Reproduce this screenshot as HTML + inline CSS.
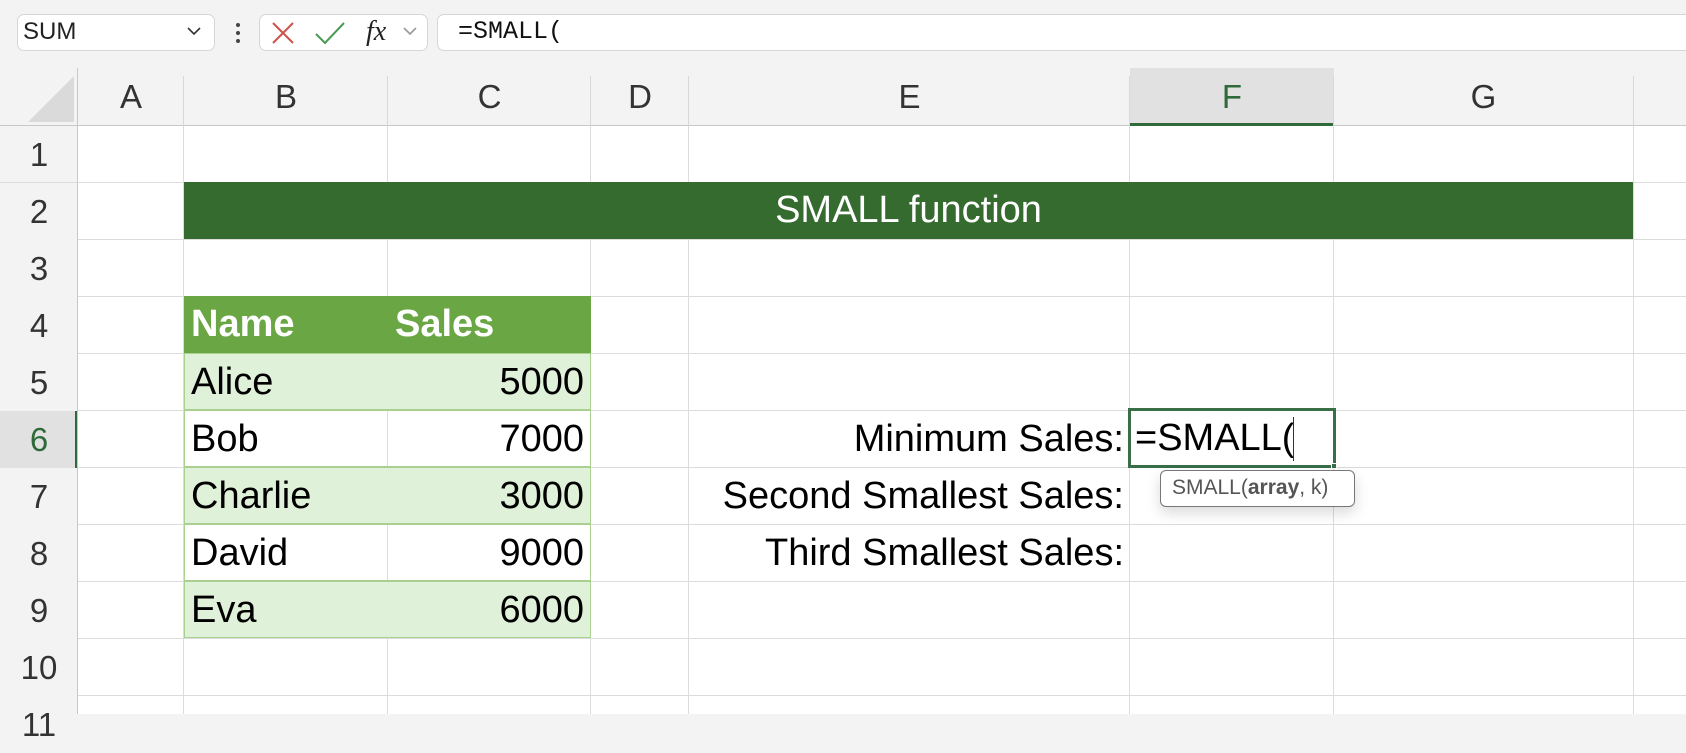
<!DOCTYPE html>
<html><head><meta charset="utf-8"><style>
*{margin:0;padding:0;box-sizing:border-box}
body{width:1686px;height:714px;overflow:hidden;background:#f3f3f3;font-family:"Liberation Sans",sans-serif;position:relative}
.abs{position:absolute}
.box{position:absolute;background:#fff;border:1px solid #d6d6d6;border-radius:7px}
.grid{position:absolute;left:78px;top:126px;width:1608px;height:588px;background:#fff}
.vl{position:absolute;top:126px;height:588px;width:1px;background:#dcdcdc}
.hl{position:absolute;left:78px;width:1608px;height:1px;background:#dcdcdc}
.ch{position:absolute;top:68px;height:58px;line-height:58px;text-align:center;font-size:33px;color:#333}
.rh{position:absolute;left:0;width:78px;text-align:center;font-size:33px;color:#333}
.c{position:absolute;font-size:38px;color:#000;line-height:57px;white-space:nowrap}
</style></head><body>
<div class="box" style="left:17px;top:14px;width:198px;height:37px"></div>
<div class="abs" style="left:23px;top:16px;font-size:24px;line-height:32px;color:#222">SUM</div>
<svg class="abs" style="left:186px;top:25px" width="16" height="12"><path d="M2 3 L8 9 L14 3" stroke="#333" stroke-width="1.6" fill="none"/></svg>
<div class="abs" style="left:236px;top:23px;width:4px;height:4px;background:#444;border-radius:2px"></div>
<div class="abs" style="left:236px;top:31px;width:4px;height:4px;background:#444;border-radius:2px"></div>
<div class="abs" style="left:236px;top:39px;width:4px;height:4px;background:#444;border-radius:2px"></div>
<div class="box" style="left:259px;top:14px;width:169px;height:37px"></div>
<svg class="abs" style="left:270px;top:20px" width="26" height="26"><path d="M3 3 L23 23 M23 3 L3 23" stroke="#d0504a" stroke-width="2" fill="none"/></svg>
<svg class="abs" style="left:314px;top:20px" width="32" height="26"><path d="M2 14 L11 23 L30 3" stroke="#4a9a52" stroke-width="2" fill="none"/></svg>
<div class="abs" style="left:366px;top:14px;font-family:'Liberation Serif',serif;font-style:italic;font-size:28px;color:#222;line-height:36px">fx</div>
<svg class="abs" style="left:402px;top:25px" width="16" height="12"><path d="M2 3 L8 9 L14 3" stroke="#999" stroke-width="1.6" fill="none"/></svg>
<div class="box" style="left:437px;top:14px;width:1260px;height:37px;border-right:none;border-radius:7px 0 0 7px"></div>
<div class="abs" style="left:458px;top:16px;font-family:'Liberation Mono',monospace;font-size:25px;line-height:32px;color:#111">=SMALL(</div>
<div class="abs" style="left:0;top:68px;width:1686px;height:58px;background:#f3f3f3;border-bottom:1px solid #c8c8c8"></div>
<svg class="abs" style="left:24px;top:74px" width="52" height="50"><path d="M50 2 L50 48 L4 48 Z" fill="#dadada"/></svg>
<div class="abs" style="left:1130px;top:68px;width:204px;height:58px;background:#e1e1e1;border-bottom:3px solid #2f6b3a"></div>
<div class="abs" style="left:0;top:411px;width:78px;height:57px;background:#e1e1e1;border-right:3px solid #2f6b3a"></div>
<div class="ch" style="left:78px;width:106px">A</div>
<div class="ch" style="left:184px;width:204px">B</div>
<div class="ch" style="left:388px;width:203px">C</div>
<div class="ch" style="left:591px;width:98px">D</div>
<div class="ch" style="left:689px;width:441px">E</div>
<div class="ch" style="left:1130px;width:204px;color:#2f6b3a">F</div>
<div class="ch" style="left:1334px;width:299px">G</div>
<div class="abs" style="left:183px;top:76px;width:1px;height:50px;background:#d8d8d8"></div>
<div class="abs" style="left:387px;top:76px;width:1px;height:50px;background:#d8d8d8"></div>
<div class="abs" style="left:590px;top:76px;width:1px;height:50px;background:#d8d8d8"></div>
<div class="abs" style="left:688px;top:76px;width:1px;height:50px;background:#d8d8d8"></div>
<div class="abs" style="left:1129px;top:76px;width:1px;height:50px;background:#d8d8d8"></div>
<div class="abs" style="left:1333px;top:76px;width:1px;height:50px;background:#d8d8d8"></div>
<div class="abs" style="left:1633px;top:76px;width:1px;height:50px;background:#d8d8d8"></div>
<div class="abs" style="left:77px;top:68px;width:1px;height:646px;background:#c8c8c8"></div>
<div class="grid"></div>
<div class="vl" style="left:183px"></div><div class="vl" style="left:387px"></div><div class="vl" style="left:590px"></div><div class="vl" style="left:688px"></div><div class="vl" style="left:1129px"></div><div class="vl" style="left:1333px"></div><div class="vl" style="left:1633px"></div>
<div class="hl" style="top:182px"></div><div class="hl" style="top:239px"></div><div class="hl" style="top:296px"></div><div class="hl" style="top:353px"></div><div class="hl" style="top:410px"></div><div class="hl" style="top:467px"></div><div class="hl" style="top:524px"></div><div class="hl" style="top:581px"></div><div class="hl" style="top:638px"></div><div class="hl" style="top:695px"></div>
<div class="rh" style="top:126px;line-height:57px">1</div>
<div class="rh" style="top:183px;line-height:57px">2</div>
<div class="rh" style="top:240px;line-height:57px">3</div>
<div class="rh" style="top:297px;line-height:57px">4</div>
<div class="rh" style="top:354px;line-height:57px">5</div>
<div class="rh" style="top:411px;line-height:57px;color:#2f6b3a">6</div>
<div class="rh" style="top:468px;line-height:57px">7</div>
<div class="rh" style="top:525px;line-height:57px">8</div>
<div class="rh" style="top:582px;line-height:57px">9</div>
<div class="rh" style="top:639px;line-height:57px">10</div>
<div class="rh" style="top:696px;line-height:57px">11</div>
<div class="abs" style="left:0;top:182px;width:78px;height:1px;background:#dcdcdc"></div>
<div class="abs" style="left:184px;top:182px;width:1449px;height:57px;background:#356b2f;color:#fff;font-size:38px;line-height:57px;text-align:center">SMALL function</div>
<div class="abs" style="left:184px;top:296px;width:407px;height:57px;background:#6aa744"></div>
<div class="c" style="left:191px;top:296px;color:#fff;font-weight:bold">Name</div>
<div class="c" style="left:395px;top:296px;color:#fff;font-weight:bold">Sales</div>
<div class="abs" style="left:184px;top:353px;width:407px;height:57px;background:#e0f1d9;border:1px solid #a9d08e"></div>
<div class="abs" style="left:184px;top:410px;width:407px;height:57px;border:1px solid #a9d08e;background:#fff"></div>
<div class="abs" style="left:387px;top:411px;width:1px;height:55px;background:#dcdcdc"></div>
<div class="abs" style="left:184px;top:467px;width:407px;height:57px;background:#e0f1d9;border:1px solid #a9d08e"></div>
<div class="abs" style="left:184px;top:524px;width:407px;height:57px;border:1px solid #a9d08e;background:#fff"></div>
<div class="abs" style="left:387px;top:525px;width:1px;height:55px;background:#dcdcdc"></div>
<div class="abs" style="left:184px;top:581px;width:407px;height:57px;background:#e0f1d9;border:1px solid #a9d08e"></div>
<div class="c" style="left:191px;top:354px">Alice</div><div class="c" style="left:388px;width:196px;text-align:right;top:354px">5000</div>
<div class="c" style="left:191px;top:411px">Bob</div><div class="c" style="left:388px;width:196px;text-align:right;top:411px">7000</div>
<div class="c" style="left:191px;top:468px">Charlie</div><div class="c" style="left:388px;width:196px;text-align:right;top:468px">3000</div>
<div class="c" style="left:191px;top:525px">David</div><div class="c" style="left:388px;width:196px;text-align:right;top:525px">9000</div>
<div class="c" style="left:191px;top:582px">Eva</div><div class="c" style="left:388px;width:196px;text-align:right;top:582px">6000</div>
<div class="c" style="left:600px;width:524px;text-align:right;top:411px">Minimum Sales:</div>
<div class="c" style="left:600px;width:524px;text-align:right;top:468px">Second Smallest Sales:</div>
<div class="c" style="left:600px;width:524px;text-align:right;top:525px">Third Smallest Sales:</div>
<div class="abs" style="left:1128px;top:408px;width:208px;height:60px;border:3px solid #3a6e47;background:#fff"></div>
<div class="c" style="left:1135px;top:410px">=SMALL(</div>
<div class="abs" style="left:1293px;top:417px;width:1px;height:44px;background:#333"></div>
<div class="abs" style="left:1331px;top:463px;width:6px;height:6px;background:#3a6e47;border:1px solid #fff"></div>
<div class="abs" style="left:1160px;top:470px;width:195px;height:37px;background:#fff;border:1px solid #777;border-radius:6px;box-shadow:0 6px 14px rgba(0,0,0,.15);font-size:21px;line-height:34px;color:#555;padding-left:11px;white-space:nowrap">SMALL(<b>array</b>, k)</div>
</body></html>
